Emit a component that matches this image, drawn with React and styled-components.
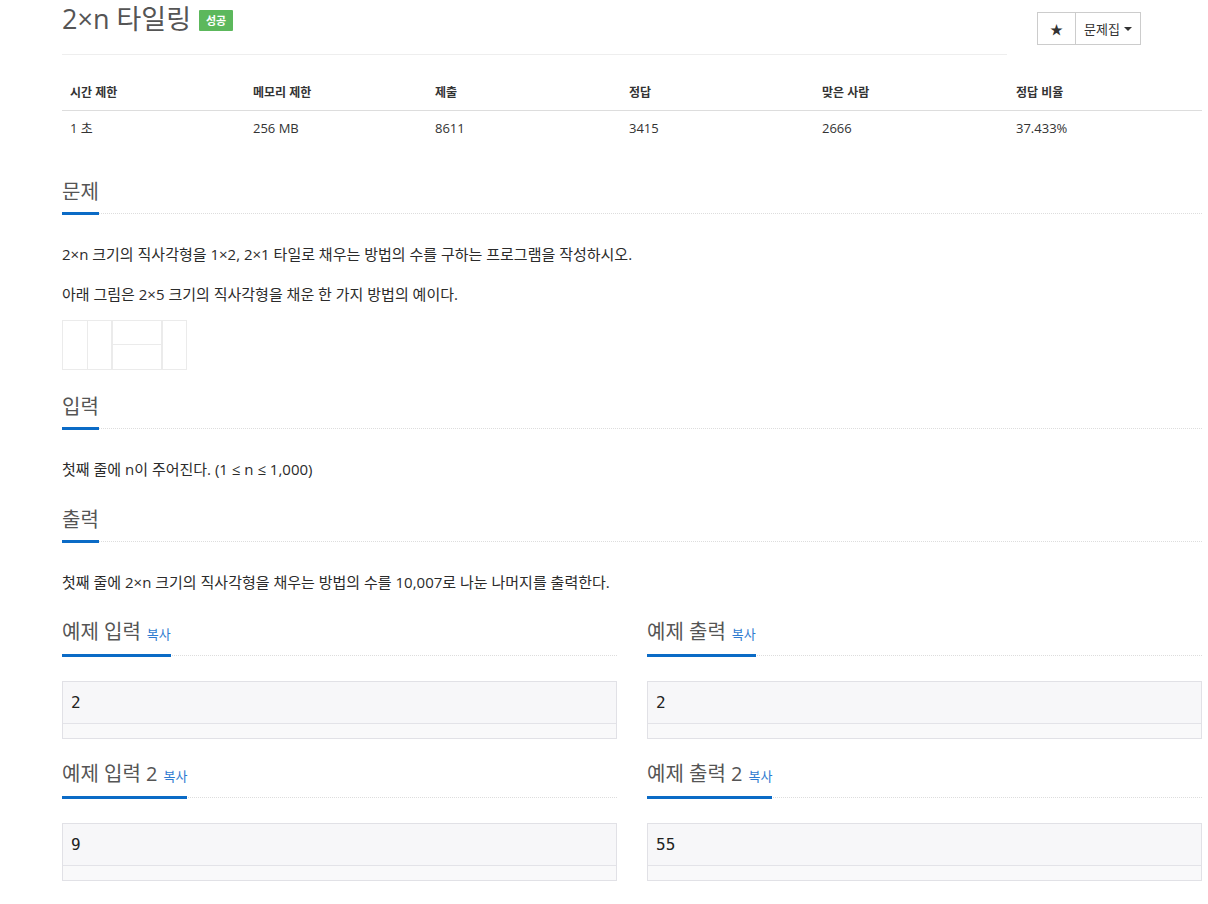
import React from 'react'
import styled, { createGlobalStyle } from 'styled-components'

const GlobalStyle = createGlobalStyle`
  body {
    margin: 0;
    background: #fff;
    color: #333;
    font-family: "Open Sans", "Noto Sans CJK KR", sans-serif;
  }
`

const Page = styled.div`
  width: 1140px;
  padding: 4px 0 30px 62px;
  display: flex;
  flex-direction: column;
`

const TitleRow = styled.div`
  display: flex;
  align-items: flex-start;
  gap: 30px;
`

const Title = styled.h1`
  width: 945px;
  margin: 0;
  padding-bottom: 21px;
  border-bottom: 1px solid #eee;
  font-size: 27px;
  font-weight: 400;
  line-height: 29px;
  color: #555;
  display: flex;
  align-items: center;
`

const Badge = styled.span`
  margin-left: 8px;
  margin-top: 4px;
  padding: 0 7px;
  height: 21px;
  line-height: 21px;
  background: #5cb85c;
  color: #fff;
  font-size: 11px;
  font-weight: 700;
  border-radius: 1px;
`

const ButtonGroup = styled.div`
  display: flex;
  margin-top: 8px;
`

const Btn = styled.button`
  height: 33px;
  padding: 0 ${p => (p.$narrow ? '12px' : '8px')};
  border: 1px solid #ccc;
  margin-left: ${p => (p.$joined ? '-1px' : '0')};
  background: #fff;
  color: #333;
  font-family: inherit;
  font-size: 13px;
  display: flex;
  align-items: center;
  gap: 4px;
`

const Caret = styled.span`
  width: 0;
  height: 0;
  border-left: 4px solid transparent;
  border-right: 4px solid transparent;
  border-top: 4px solid #333;
`

const Table = styled.table`
  width: 1140px;
  margin-top: 18px;
  border-collapse: collapse;
  table-layout: fixed;
`

const Th = styled.th`
  text-align: left;
  padding: 10px 8px 7px;
  line-height: 20px;
  font-size: 12px;
  font-weight: 700;
  border-bottom: 1px solid #ddd;
`

const Td = styled.td`
  padding: 7px 8px;
  line-height: 20px;
  font-size: 13px;
`

const Section = styled.section`
  margin-top: ${p => p.$top}px;
  display: flex;
  flex-direction: column;
`

const HeadLine = styled.div`
  display: flex;
  border-bottom: 1px dotted #ddd;
`

const Heading = styled.h2`
  margin: 0 0 -2px;
  padding-bottom: 5px;
  border-bottom: 3px solid #0b6bc6;
  font-size: 20px;
  font-weight: 400;
  line-height: 30px;
  color: #555;
  display: flex;
  align-items: baseline;
  gap: 6px;
`

const CopyLink = styled.a`
  font-size: 13px;
  color: #2f7bd0;
  text-decoration: none;
`

const Para = styled.p`
  margin: ${p => (p.$first ? '28px' : '0')} 0 16px;
  font-size: 15px;
  line-height: 24px;
  color: #2b2b2b;
`

const Figure = styled.div`
  margin-top: -2px;
  height: 50px;
  margin-bottom: 16px;
`

const Samples = styled.div`
  display: grid;
  grid-template-columns: 555px 555px;
  column-gap: 30px;
  margin-top: 7px;
  row-gap: 20px;
`

const SampleBox = styled.div`
  margin-top: 25px;
  border: 1px solid #e1e1e6;
  background: #f7f7f9;
`

const Pre = styled.pre`
  margin: 0;
  padding: 0 8px;
  height: 41px;
  line-height: 41px;
  font-family: "DejaVu Sans Mono", monospace;
  font-size: 16px;
  color: #222;
`

const ScrollStrip = styled.div`
  height: 14px;
  border-top: 1px solid #e3e3e8;
  background: #f9f9fa;
`

function TileFigure () {
  return (
    <svg width='125' height='50' viewBox='0 0 125 50'>
      <g fill='#fff' stroke='#ebebeb' strokeWidth='1'>
        <rect x='0.5' y='0.5' width='25' height='49' />
        <rect x='25.5' y='0.5' width='24' height='49' />
        <rect x='50.5' y='0.5' width='49' height='24' />
        <rect x='50.5' y='24.5' width='49' height='25' />
        <rect x='100.5' y='0.5' width='24' height='49' />
      </g>
    </svg>
  )
}

const colWidths = [183, 182, 194, 193, 194, 194]

const stats = [
  ['시간 제한', '1 초'],
  ['메모리 제한', '256 MB'],
  ['제출', '8611'],
  ['정답', '3415'],
  ['맞은 사람', '2666'],
  ['정답 비율', '37.433%']
]

const samples = [
  { title: '예제 입력', value: '2' },
  { title: '예제 출력', value: '2' },
  { title: '예제 입력 2', value: '9' },
  { title: '예제 출력 2', value: '55' }
]

function SectionTitle ({ children, copy }) {
  return (
    <HeadLine>
      <Heading>
        {children}
        {copy && <CopyLink href='#'>복사</CopyLink>}
      </Heading>
    </HeadLine>
  )
}

export default function App () {
  return (
    <Page>
      <GlobalStyle />
      <TitleRow>
        <Title>
          2×n 타일링
          <Badge>성공</Badge>
        </Title>
        <ButtonGroup>
          <Btn $narrow>★</Btn>
          <Btn $joined>문제집 <Caret /></Btn>
        </ButtonGroup>
      </TitleRow>

      <Table>
        <colgroup>
          {colWidths.map((w, i) => <col key={i} style={{ width: w }} />)}
        </colgroup>
        <thead>
          <tr>
            {stats.map(s => <Th key={s[0]}>{s[0]}</Th>)}
          </tr>
        </thead>
        <tbody>
          <tr>
            {stats.map(s => <Td key={s[0]}>{s[1]}</Td>)}
          </tr>
        </tbody>
      </Table>

      <Section $top={32}>
        <SectionTitle>문제</SectionTitle>
        <Para $first>2×n 크기의 직사각형을 1×2, 2×1 타일로 채우는 방법의 수를 구하는 프로그램을 작성하시오.</Para>
        <Para>아래 그림은 2×5 크기의 직사각형을 채운 한 가지 방법의 예이다.</Para>
        <Figure><TileFigure /></Figure>
      </Section>

      <Section $top={6}>
        <SectionTitle>입력</SectionTitle>
        <Para $first>첫째 줄에 n이 주어진다. (1 ≤ n ≤ 1,000)</Para>
      </Section>

      <Section $top={8}>
        <SectionTitle>출력</SectionTitle>
        <Para $first>첫째 줄에 2×n 크기의 직사각형을 채우는 방법의 수를 10,007로 나눈 나머지를 출력한다.</Para>
      </Section>

      <Samples>
        {samples.map(s => (
          <section key={s.title}>
            <SectionTitle copy>{s.title}</SectionTitle>
            <SampleBox>
              <Pre>{s.value}</Pre>
              <ScrollStrip />
            </SampleBox>
          </section>
        ))}
      </Samples>
    </Page>
  )
}
